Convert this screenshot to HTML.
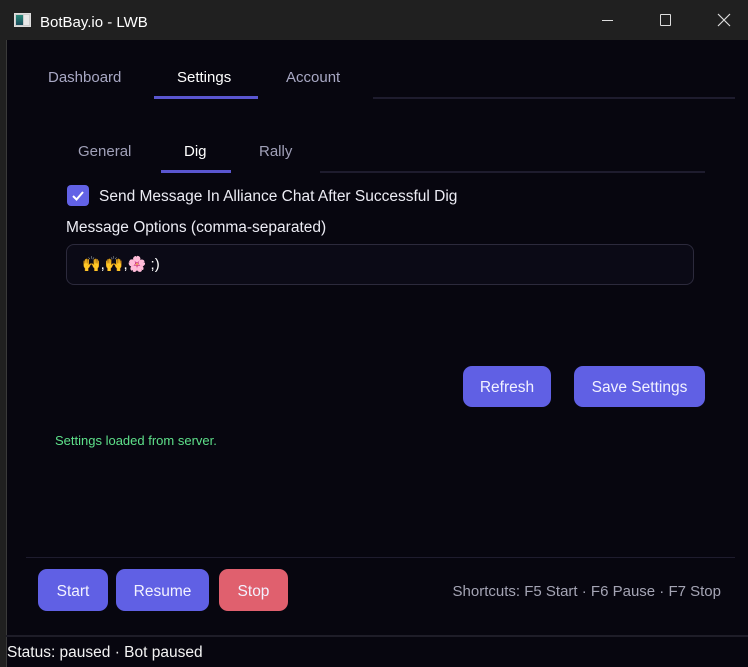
<!DOCTYPE html>
<html><head><meta charset="utf-8"><style>
*{margin:0;padding:0;box-sizing:border-box}
body{width:748px;height:667px;background:#202020;font-family:"Liberation Sans","Noto Sans CJK SC",sans-serif;position:relative;overflow:hidden;color:#e8e8f0}
.abs{position:absolute}
.title{left:0;top:0;width:748px;height:40px;background:#202020}
.main{left:6px;top:40px;width:742px;height:627px;background:#07060f;border-left:1px solid #3a3a3a}
.t{position:absolute;white-space:nowrap;line-height:1}
.btn{position:absolute;background:#6060e4;border-radius:9px;color:#f2f2ff;font-size:15.5px;display:flex;align-items:center;justify-content:center;padding-top:3px}
</style></head><body>
<div class="abs title">
  <div class="abs" style="left:14px;top:13px;width:17px;height:14px;background:#ccc;border:1px solid #ddd"><div style="position:absolute;left:1px;top:1px;width:7px;height:10px;background:linear-gradient(#2a8a7a,#1a4a5a)"></div><div style="position:absolute;left:9px;top:1px;width:5px;height:10px;background:#e8e8e8"></div></div>
  <div class="t" style="left:40px;top:15px;font-size:15px;color:#fff">BotBay.io - LWB</div>
  <div class="abs" style="left:602px;top:20px;width:11px;height:1px;background:#ddd"></div>
  <div class="abs" style="left:660px;top:14px;width:11px;height:12px;border:1px solid #ddd;border-radius:1px"></div>
  <svg class="abs" style="left:717px;top:13px" width="14" height="14"><path d="M1 1L13 13M13 1L1 13" stroke="#ddd" stroke-width="1.2"/></svg>
</div>
<div class="abs main"></div>
<div class="t" style="left:48px;top:70px;font-size:15px;color:#a8a8c4">Dashboard</div>
<div class="t" style="left:177px;top:70px;font-size:15px;color:#fff">Settings</div>
<div class="t" style="left:286px;top:70px;font-size:15px;color:#a8a8c4">Account</div>
<div class="abs" style="left:154px;top:96px;width:104px;height:3px;background:#5a56d0"></div>
<div class="abs" style="left:373px;top:97px;width:362px;height:2px;background:#1e1c2e"></div>

<div class="t" style="left:78px;top:144px;font-size:15px;color:#a0a0b8">General</div>
<div class="t" style="left:184px;top:144px;font-size:15px;color:#fff">Dig</div>
<div class="t" style="left:259px;top:144px;font-size:15px;color:#a0a0b8">Rally</div>
<div class="abs" style="left:161px;top:170px;width:70px;height:3px;background:#5a56d0"></div>
<div class="abs" style="left:320px;top:171px;width:385px;height:2px;background:#1e1c2e"></div>

<div class="abs" style="left:67px;top:185px;width:22px;height:21px;background:#6262e6;border-radius:4px"><svg width="22" height="21"><path d="M6 11L9.5 14.5L16 7" stroke="#fff" stroke-width="2" fill="none"/></svg></div>
<div class="t" style="left:99px;top:189px;font-size:15.5px;color:#ececf4">Send Message In Alliance Chat After Successful Dig</div>
<div class="t" style="left:66px;top:220px;font-size:15.5px;color:#ececf4">Message Options (comma-separated)</div>
<div class="abs" style="left:66px;top:244px;width:628px;height:41px;border:1px solid #2c2a3c;border-radius:8px;background:#0b0a16"></div>
<div class="t" style="left:82px;top:257px;font-size:15px;color:#fff">🙌,🙌,🌸 ;)</div>

<div class="btn" style="left:463px;top:366px;width:88px;height:41px">Refresh</div>
<div class="btn" style="left:574px;top:366px;width:131px;height:41px">Save Settings</div>
<div class="t" style="left:55px;top:434px;font-size:13px;color:#5ee08a">Settings loaded from server.</div>

<div class="abs" style="left:26px;top:557px;width:709px;height:1px;background:#1e1c2e"></div>
<div class="btn" style="left:38px;top:569px;width:70px;height:42px">Start</div>
<div class="btn" style="left:116px;top:569px;width:93px;height:42px">Resume</div>
<div class="btn" style="left:219px;top:569px;width:69px;height:42px;background:#e0606e">Stop</div>
<div class="t" style="right:27px;top:584px;font-size:15px;color:#a4a4b4">Shortcuts: F5 Start · F6 Pause · F7 Stop</div>

<div class="abs" style="left:6px;top:635px;width:742px;height:2px;background:#1e1d28"></div>
<div class="t" style="left:7px;top:645px;font-size:15.5px;color:#f4f4f4">Status: paused · Bot paused</div>
</body></html>
